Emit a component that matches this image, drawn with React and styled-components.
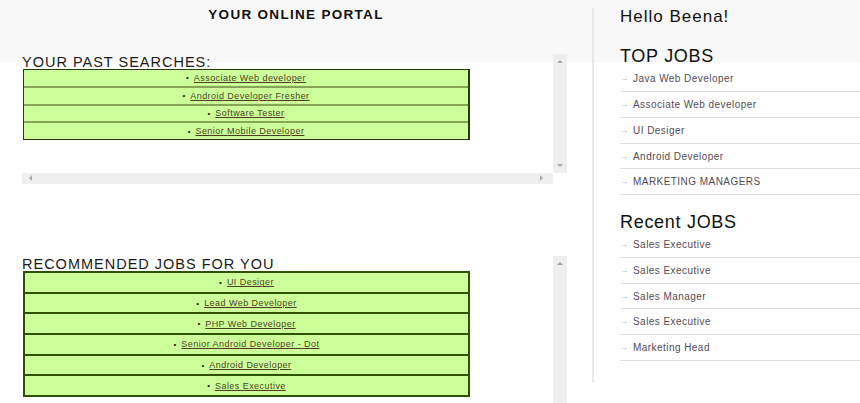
import styled, {createGlobalStyle} from 'styled-components';

const GlobalStyle = createGlobalStyle`
    body {
        margin: 0;
        font-family: "Liberation Sans", Arial, sans-serif;
        background: linear-gradient(#f8f8f8 0, #f8f8f8 62px, #ffffff 62px);
    }
`;

const Page = styled.div`
    display: flex;
    width: 860px;
    height: 403px;
    overflow: hidden;
`;

const Main = styled.div`
    width: 592px;
    padding-top: 8px;
    display: flex;
    flex-direction: column;
`;

const Title = styled.h1`
    margin: 0 0 32px;
    text-align: center;
    font-size: 13.5px;
    line-height: 1;
    font-weight: bold;
    letter-spacing: 1.3px;
    color: #111;
`;

const ScrollBox = styled.div`
    margin: ${props => props.$top}px 0 0 22px;
    width: 545px;
    display: grid;
    grid-template-columns: 1fr 14px;
    grid-template-rows: ${props => props.$height}px ${props => props.$hbar ? '11px' : ''};
`;

const ScrollContent = styled.div`
    overflow: hidden;
    padding-top: 1px;
`;

const VBar = styled.div`
    background: #efefef;
    display: flex;
    flex-direction: column;
    justify-content: space-between;
    align-items: center;
    padding: 6px 0;
`;

const HBar = styled.div`
    background: #efefef;
    display: flex;
    justify-content: space-between;
    align-items: center;
    padding: 0 10px 0 7px;
`;

const Arrow = styled.span`
    width: 0;
    height: 0;
    border: 3px solid transparent;
    ${props => props.$dir === 'up' && 'border-bottom-color: #a8a8a8; border-top-width: 0;'}
    ${props => props.$dir === 'down' && 'border-top-color: #a8a8a8; border-bottom-width: 0;'}
    ${props => props.$dir === 'left' && 'border-right-color: #a8a8a8; border-left-width: 0;'}
    ${props => props.$dir === 'right' && 'border-left-color: #a8a8a8; border-right-width: 0;'}
`;

const SectionTitle = styled.h2`
    margin: 0;
    font-size: 14.5px;
    line-height: 1;
    font-weight: normal;
    letter-spacing: 1px;
    color: #1a1a1a;
`;

const JobTable = styled.ul`
    list-style: none;
    margin: 0 0 0 1px;
    padding: 0;
    width: 447px;
    box-sizing: border-box;
    background: #ccff99;
    border: ${props => props.$strong ? '2px solid #2d5200' : '1px solid #2a3512'};
    border-right-width: 2px;
`;

const JobRow = styled.li`
    height: ${props => props.$strong ? '18.7px' : '15.8px'};
    display: flex;
    justify-content: center;
    align-items: center;
    border-top: ${props => props.$first ? 'none' : props.$strong ? '2px solid #2d5200' : '2px solid #86a456'};
`;

const Bullet = styled.span`
    font-size: 8px;
    margin-right: 5px;
    color: #222;
`;

const JobLink = styled.a`
    font-size: 9px;
    letter-spacing: 0.45px;
    color: #4f3f22;
    text-decoration: underline;
`;

const Side = styled.aside`
    flex: 1;
    margin-top: 8px;
    height: 374px;
    border-left: 2px solid #e8e8e8;
    padding-left: 26px;
`;

const Greeting = styled.div`
    font-size: 17px;
    line-height: 1;
    letter-spacing: 1px;
    color: #111;
`;

const SideHeading = styled.h3`
    margin: ${props => props.$top}px 0 0;
    font-size: 18px;
    line-height: 1;
    font-weight: normal;
    letter-spacing: 0.7px;
    color: #111;
`;

const SideList = styled.ul`
    list-style: none;
    margin: 1.4px 0 0;
    padding: 0;
`;

const SideItem = styled.li`
    height: 24.75px;
    border-bottom: 1px solid #dedede;
    display: flex;
    align-items: center;
    font-size: 10px;
    letter-spacing: 0.45px;
    color: #544a54;
`;

const ItemArrow = styled.span`
    width: 13px;
    font-size: 8px;
    color: #a0a0a0;
`;

const pastSearches = ['Associate Web developer', 'Android Developer Fresher', 'Software Tester', 'Senior Mobile Developer'];
const recommended = ['UI Desiger', 'Lead Web Developer', 'PHP Web Developer', 'Senior Android Developer - Dot', 'Android Developer', 'Sales Executive'];
const topJobs = ['Java Web Developer', 'Associate Web developer', 'UI Desiger', 'Android Developer', 'MARKETING MANAGERS'];
const recentJobs = ['Sales Executive', 'Sales Executive', 'Sales Manager', 'Sales Executive', 'Marketing Head'];

function Jobs({items, strong}) {
    return (
        <JobTable $strong={strong}>
            {items.map((job, i) => (
                <JobRow key={i} $strong={strong} $first={i === 0}>
                    <Bullet>•</Bullet>
                    <JobLink href="#">{job}</JobLink>
                </JobRow>
            ))}
        </JobTable>
    );
}

function SideJobs({items}) {
    return (
        <SideList>
            {items.map((job, i) => (
                <SideItem key={i}>
                    <ItemArrow>→</ItemArrow>
                    {job}
                </SideItem>
            ))}
        </SideList>
    );
}

export default function App() {
    return (
        <Page>
            <GlobalStyle />
            <Main>
                <Title>YOUR ONLINE PORTAL</Title>
                <ScrollBox $top={0} $height={119} $hbar>
                    <ScrollContent>
                        <SectionTitle>YOUR PAST SEARCHES:</SectionTitle>
                        <Jobs items={pastSearches} />
                    </ScrollContent>
                    <VBar>
                        <Arrow $dir="up" />
                        <Arrow $dir="down" />
                    </VBar>
                    <HBar>
                        <Arrow $dir="left" />
                        <Arrow $dir="right" />
                    </HBar>
                    <div />
                </ScrollBox>
                <ScrollBox $top={72} $height={170}>
                    <ScrollContent>
                        <SectionTitle>RECOMMENDED JOBS FOR YOU</SectionTitle>
                        <Jobs items={recommended} strong />
                    </ScrollContent>
                    <VBar>
                        <Arrow $dir="up" />
                        <Arrow $dir="down" />
                    </VBar>
                </ScrollBox>
            </Main>
            <Side>
                <Greeting>Hello Beena!</Greeting>
                <SideHeading $top={22}>TOP JOBS</SideHeading>
                <SideJobs items={topJobs} />
                <SideHeading $top={17.6}>Recent JOBS</SideHeading>
                <SideJobs items={recentJobs} />
            </Side>
        </Page>
    );
}
